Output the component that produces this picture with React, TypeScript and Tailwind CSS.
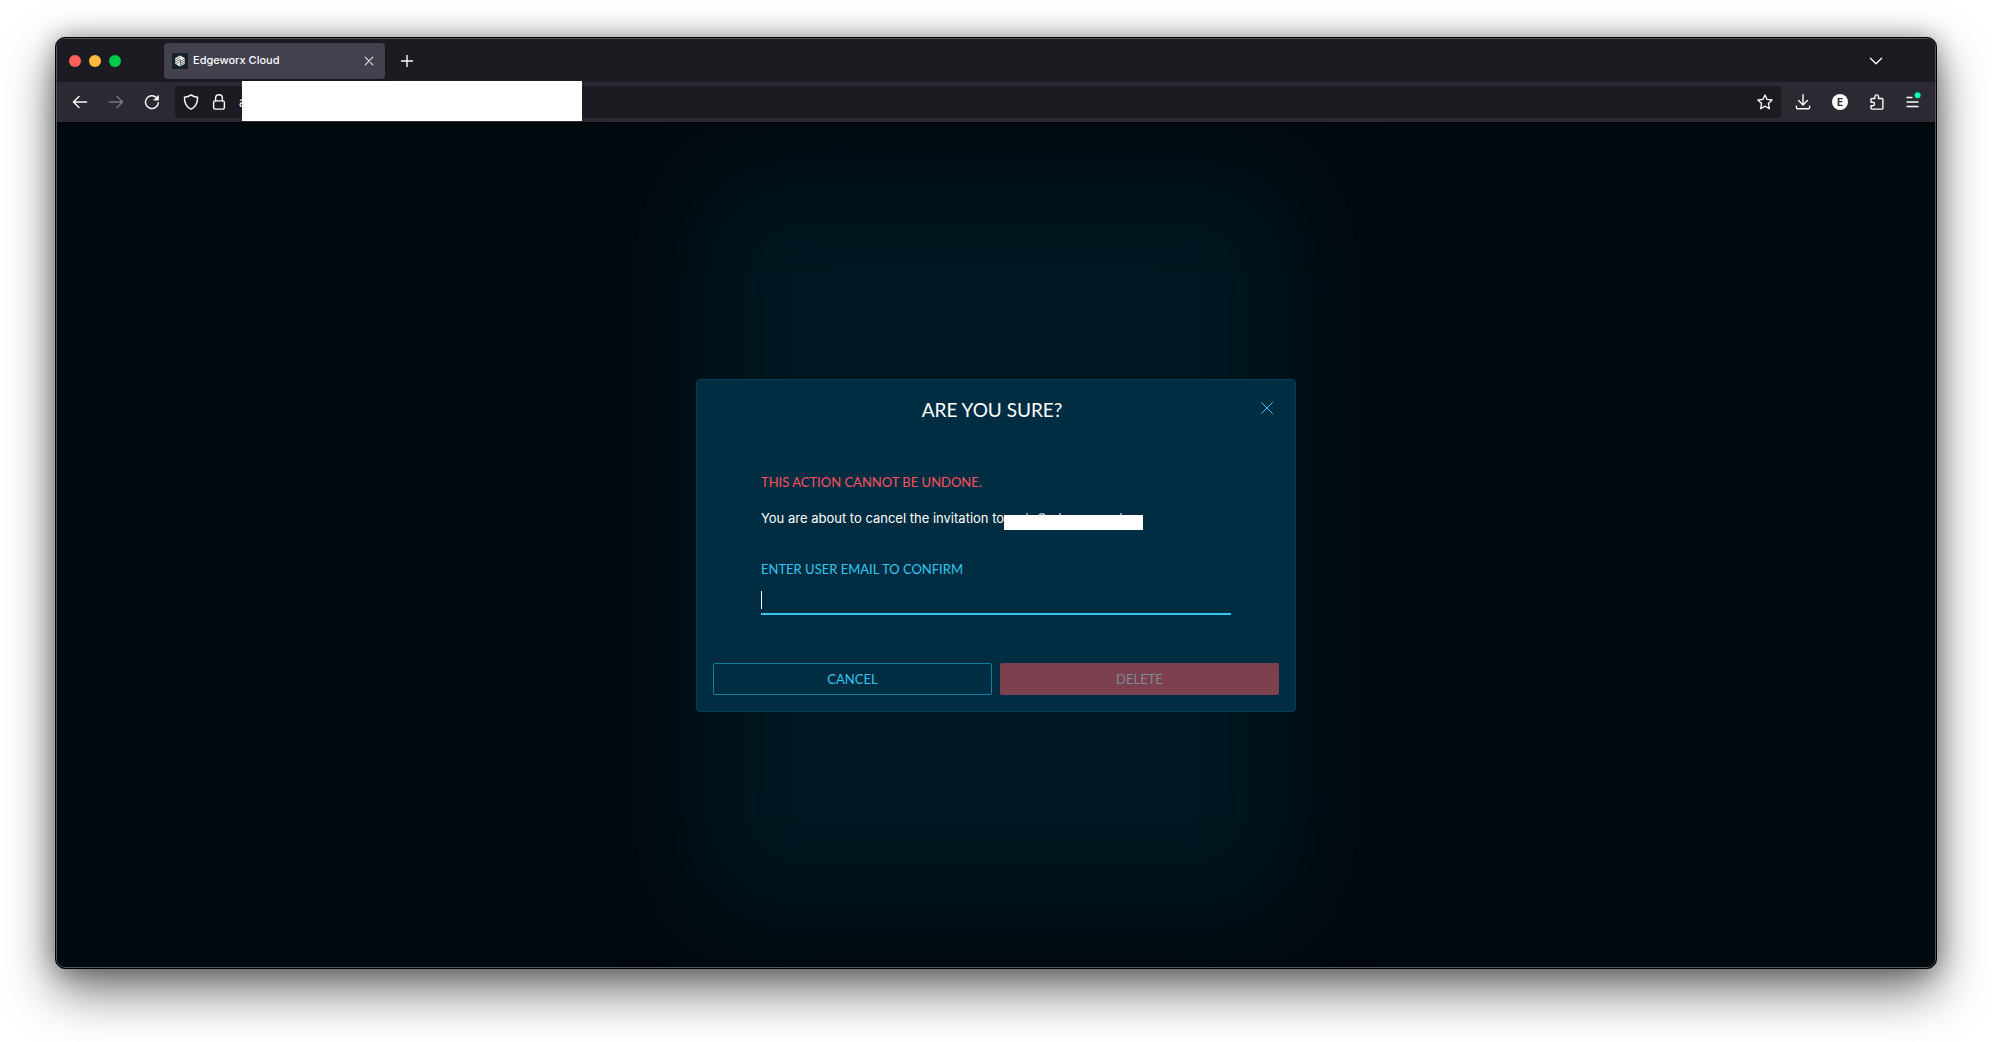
import type { ReactNode } from "react";

function IconButton({ label, className = "", children }: { label: string; className?: string; children: ReactNode }) {
  return (
    <button type="button" aria-label={label} className={`flex h-8 shrink-0 items-center justify-center ${className}`}>
      {children}
    </button>
  );
}

const stroke = {
  fill: "none",
  stroke: "currentColor",
  strokeWidth: 1.4,
  strokeLinecap: "round" as const,
  strokeLinejoin: "round" as const,
};

function TabBar() {
  return (
    <header className="flex h-[43px] shrink-0 items-center bg-[#1c1b22] pl-3">
      <div className="flex w-[52px] justify-between">
        <button type="button" aria-label="Close window" className="size-3 rounded-full bg-[#ff5f5d]" />
        <button type="button" aria-label="Minimise window" className="size-3 rounded-full bg-[#ffbb40]" />
        <button type="button" aria-label="Zoom window" className="size-3 rounded-full bg-[#00ca4b]" />
      </div>
      <div className="ml-[43px] flex h-9 w-[221px] items-center rounded bg-[#42414d] pl-2 shadow">
        <svg viewBox="0 0 16 16" className="size-4" aria-hidden="true">
          <rect width="16" height="16" fill="#152228" />
          <path d="M8 2.6 12.8 5.3V10.7L8 13.4 3.2 10.7V5.3Z" fill="#f4f6f7" />
          <path d="M3.2 7.2 8.6 4.1M3.2 9.4 8.2 6.5M8.4 6.2v7M8.4 8.4l4.4-2.5M8.4 10.2l4.4-2.5M8.4 12l4.4-2.5M4.2 11l3.4-2" stroke="#152228" strokeWidth=".6" />
        </svg>
        <span className="ml-[5px] text-[11px] font-medium text-[#fbfbfe]">Edgeworx Cloud</span>
        <IconButton label="Close tab" className="ml-auto w-8 text-[#e4e4ea]">
          <svg viewBox="0 0 10 10" className="size-[10px]" {...stroke} strokeWidth={1.1}>
            <path d="M1.2 1.2 8.8 8.8M8.8 1.2 1.2 8.8" />
          </svg>
        </IconButton>
      </div>
      <IconButton label="New tab" className="ml-1 w-9 text-[#fbfbfe]">
        <svg viewBox="0 0 14 14" className="size-[14px]" {...stroke}>
          <path d="M7 1.5v11M1.5 7h11" />
        </svg>
      </IconButton>
      <IconButton label="List all tabs" className="mr-[43px] ml-auto w-8 text-[#fbfbfe]">
        <svg viewBox="0 0 14 14" className="size-[14px]" {...stroke} strokeWidth={1.3}>
          <path d="M1.4 4.2 7 9.8l5.6-5.6" />
        </svg>
      </IconButton>
    </header>
  );
}

function Toolbar() {
  return (
    <nav aria-label="Browser" className="flex h-10 shrink-0 items-center bg-[#2b2a33] pl-[5px] text-[#fbfbfe]">
      <IconButton label="Back" className="w-9">
        <svg viewBox="0 0 16 16" className="size-4" {...stroke}>
          <path d="M14.6 8H1.6M7 2.4 1.4 8 7 13.6" />
        </svg>
      </IconButton>
      <IconButton label="Forward" className="w-9 text-[#7b7a83]">
        <svg viewBox="0 0 16 16" className="size-4" {...stroke}>
          <path d="M1.4 8h13M9 2.4 14.6 8 9 13.6" />
        </svg>
      </IconButton>
      <IconButton label="Reload" className="w-9">
        <svg viewBox="0 0 16 16" className="size-4" {...stroke}>
          <path d="M14.3 8.6A6.4 6.4 0 1 1 12.4 3.6" />
          <path d="M14.4 1.8v4.3h-4.3z" fill="currentColor" strokeWidth={0.8} />
        </svg>
      </IconButton>
      <div className="relative ml-[5px] flex h-8 flex-1 items-center rounded bg-[#1c1b22]">
        <IconButton label="Tracking protection" className="w-8">
          <svg viewBox="0 0 16 16" className="size-4" {...stroke}>
            <path d="M8 .9c1.8 1.4 4 2.1 6.6 2.3 0 5.4-1.4 9.6-6.6 12C2.8 12.8 1.4 8.6 1.4 3.2 4 3 6.2 2.3 8 .9z" />
          </svg>
        </IconButton>
        <IconButton label="Site information" className="w-6">
          <svg viewBox="0 0 16 16" className="size-4" {...stroke}>
            <rect x="2.6" y="6.9" width="10.8" height="8.2" rx="1.5" />
            <path d="M4.6 6.9V4.2a3.4 3.4 0 0 1 6.8 0v2.7" />
          </svg>
        </IconButton>
        <input
          aria-label="Address"
          defaultValue="a"
          className="ml-2 h-8 min-w-0 flex-1 bg-transparent text-[13px] outline-none"
        />
        <span aria-hidden="true" className="absolute top-[-5px] left-[67px] h-10 w-[340px] bg-white" />
        <IconButton label="Bookmark this page" className="w-8">
          <svg viewBox="0 0 16 16" className="size-4" {...stroke} strokeWidth={1.3}>
            <path d="m8 .9 2.1 4.5 5 .6-3.7 3.4 1 5.3L8 12.1l-4.4 2.6 1-5.3L.9 6l5-.6z" />
          </svg>
        </IconButton>
      </div>
      <div className="mr-1 ml-1 flex">
        <IconButton label="Downloads" className="w-9">
          <svg viewBox="0 0 16 16" className="size-4" {...stroke}>
            <path d="M8 .8v10M3.6 6.6 8 11l4.4-4.4M1.4 12.2v1.3q0 1.2 1.2 1.2h10.8q1.2 0 1.2-1.2v-1.3" />
          </svg>
        </IconButton>
        <IconButton label="Account" className="w-[38px]">
          <span className="flex size-4 items-center justify-center rounded-full bg-[#fbfbfe] text-[10px] leading-none font-bold text-[#2b2a33]">E</span>
        </IconButton>
        <IconButton label="Extensions" className="w-9">
          <svg viewBox="0 0 16 16" className="size-4" {...stroke}>
            <path d="M2 7V5.5Q2 4.5 3 4.5h2.9V2.7a1.8 1.8 0 0 1 3.6 0v1.8h3.4q1 0 1 1v8.6q0 1-1 1H3q-1 0-1-1v-2.3h1.8a1.7 1.7 0 0 0 0-3.5H2z" />
          </svg>
        </IconButton>
        <IconButton label="Application menu" className="w-9">
          <svg viewBox="0 0 16 16" className="size-4 overflow-visible" {...stroke}>
            <path d="M2 3.5h5M2 8h11M2 12.5h11" />
            <circle cx="12.6" cy="1.2" r="3" fill="#00ffb3" stroke="none" />
          </svg>
        </IconButton>
      </div>
    </nav>
  );
}

function ConfirmDialog() {
  return (
    <form
      role="dialog"
      aria-labelledby="dialog-title"
      className="relative w-full max-w-[600px] rounded border border-[#003f58] bg-[#002d42] p-4 font-['Lato',sans-serif] text-[13px] leading-5 text-white"
    >
      <div className="flex h-7 items-center justify-center pr-2">
        <h1 id="dialog-title" className="text-[19px] leading-7">ARE YOU SURE?</h1>
        <button type="button" aria-label="Close dialog" className="absolute top-4 right-4 flex size-6 items-center justify-center text-[#36c5f0]">
          <svg viewBox="0 0 12 12" className="size-3" {...stroke} strokeWidth={1}>
            <path d="M.5.5 11.5 11.5M11.5.5.5 11.5" />
          </svg>
        </button>
      </div>
      <div className="mx-12 mt-12 flex flex-col">
        <p className="text-[#fd4f5e]">THIS ACTION CANNOT BE UNDONE.</p>
        <p className="mt-4 flex h-5 font-['Inter',sans-serif]">
          You are about to cancel the invitation to
          <svg viewBox="0 0 139 18" className="mt-1 h-[18px] w-[139px]" aria-hidden="true">
            <path d="M22 2h2M35 3q3-2.5 6 0M56 1v3M116 2h2" stroke="#b4c2ca" strokeWidth="1.5" fill="none" />
            <rect y="3" width="139" height="15" fill="#fff" />
          </svg>
        </p>
        <label htmlFor="email" className="mt-[31px] text-[#36c5f0]">ENTER USER EMAIL TO CONFIRM</label>
        <div className="relative mt-1 flex">
          <input
            id="email"
            type="email"
            autoFocus
            className="h-8 w-full border-b-2 border-[#36c5f0] bg-transparent text-sm caret-transparent outline-none"
          />
          <span aria-hidden="true" className="absolute top-2 left-0 h-[18px] w-px bg-white" />
        </div>
      </div>
      <div className="mt-12 grid grid-cols-2 gap-2">
        <button type="button" className="h-8 rounded-xs border border-[#167d9f] text-[#36c5f0]">CANCEL</button>
        <button type="submit" disabled className="h-8 rounded-xs bg-[#7c404e] text-[#7e8b99]">DELETE</button>
      </div>
    </form>
  );
}

export default function App() {
  return (
    <div className="flex min-h-screen bg-white px-[55px] pt-[37px] pb-[73px] font-['Inter',sans-serif]">
      <div className="flex flex-1 flex-col overflow-hidden rounded-[10px] border border-black bg-[#00090e] shadow-[0_22px_50px_rgba(0,0,0,0.55),0_0_24px_rgba(0,0,0,0.35)]">
        <div className="flex flex-1 flex-col overflow-hidden rounded-[9px] border border-[#55555c]">
          <TabBar />
          <Toolbar />
          <main className="relative flex flex-1 items-center justify-center overflow-hidden border-t border-black">
            <div aria-hidden="true" className="absolute inset-x-[34%] inset-y-[6%] rounded-[60px] bg-[#001620] blur-[48px]" />
            <ConfirmDialog />
          </main>
        </div>
      </div>
    </div>
  );
}
